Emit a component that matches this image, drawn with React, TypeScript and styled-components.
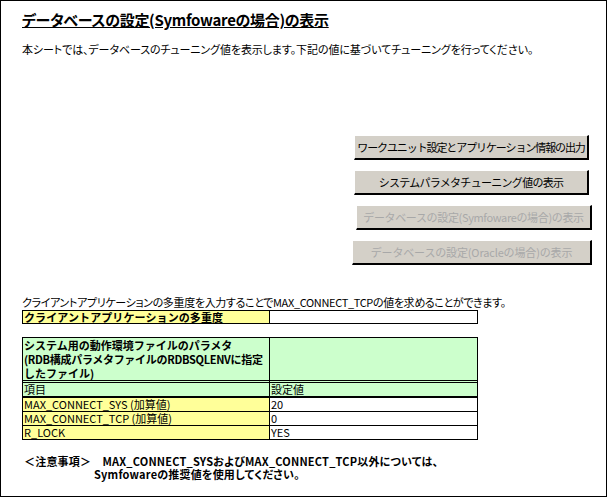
import React from "react";
import styled, { createGlobalStyle } from "styled-components";

const GlobalStyle = createGlobalStyle`
  html, body {
    margin: 0;
    padding: 0;
    background: #ffffff;
  }
  body {
    font-family: "Noto Sans CJK JP", "Liberation Sans", sans-serif;
    color: #000;
  }
`;

const Sheet = styled.div`
  box-sizing: border-box;
  width: 607px;
  height: 497px;
  border: 1px solid #000;
  padding-left: 21px;
  display: flex;
  flex-direction: column;
`;

const Title = styled.h1`
  margin: 9px 0 0;
  height: 20px;
  line-height: 20px;
  font-size: 15px;
  font-weight: 700;
  letter-spacing: -0.3px;
  font-feature-settings: "palt";
  text-decoration: underline;
  text-underline-offset: 1px;
  white-space: nowrap;
`;

const Text = styled.p<{ $top: number; $spacing?: number }>`
  margin: ${(p) => p.$top}px 0 0;
  line-height: 14px;
  height: 14px;
  font-size: 11px;
  letter-spacing: ${(p) => p.$spacing ?? 0}px;
  font-feature-settings: "palt";
  white-space: nowrap;
`;

const ButtonStack = styled.div`
  margin-top: 79px;
  padding-right: 14px;
  display: flex;
  flex-direction: column;
  align-items: flex-end;
  gap: 10px;
`;

const SheetButton = styled.button<{ $width: number; $inset?: number; $spacing?: number }>`
  box-sizing: border-box;
  width: ${(p) => p.$width}px;
  height: 25px;
  margin-right: ${(p) => p.$inset ?? 0}px;
  padding: 0;
  background: #d4d0c8;
  border-style: solid;
  border-width: 1px 2px 2px 1px;
  border-color: #ffffff #000000 #000000 #ffffff;
  font-family: inherit;
  font-size: 11px;
  letter-spacing: ${(p) => p.$spacing ?? -0.7}px;
  color: #000;
  white-space: nowrap;
  cursor: default;

  &:disabled {
    color: #a8a8a8;
  }
`;

const Grid = styled.div<{ $top: number }>`
  margin-top: ${(p) => p.$top}px;
  width: 455px;
  display: grid;
  grid-template-columns: 247px 208px;
  border-top: 1px solid #000;
  border-left: 1px solid #000;
`;

const Cell = styled.div<{
  $bg?: string;
  $h: number;
  $bold?: boolean;
  $bottom?: string;
}>`
  height: ${(p) => p.$h}px;
  background: ${(p) => p.$bg ?? "#ffffff"};
  border-right: 1px solid #000;
  border-bottom: ${(p) => p.$bottom ?? "1px solid #000"};
  padding-left: 1px;
  font-size: 11px;
  line-height: ${(p) => Math.min(p.$h, 13)}px;
  font-weight: ${(p) => (p.$bold ? 700 : 400)};
  letter-spacing: ${(p) => (p.$bold ? "0.1px" : "0")};
  white-space: nowrap;
`;

const HeaderLine = styled.div<{ $spacing?: number }>`
  height: 14px;
  line-height: 14px;
  letter-spacing: ${(p) => p.$spacing ?? 0}px;
  white-space: nowrap;
`;

const Note = styled.div`
  margin-top: 15px;
  padding-left: 2px;
  font-size: 11px;
  font-weight: 700;
  line-height: 13px;
  letter-spacing: 0.2px;
  font-feature-settings: "palt";
  white-space: nowrap;
`;

const NoteLine = styled.div<{ $indent?: number }>`
  padding-left: ${(p) => p.$indent ?? 0}px;
`;

const YELLOW = "#ffff99";
const GREEN = "#ccffcc";

const rows = [
  { name: "MAX_CONNECT_SYS (加算値)", value: "20" },
  { name: "MAX_CONNECT_TCP (加算値)", value: "0" },
  { name: "R_LOCK", value: "YES" },
];

export default function App() {
  return (
    <>
      <GlobalStyle />
      <Sheet>
        <Title>データベースの設定(Symfowareの場合)の表示</Title>
        <Text $top={12} $spacing={-0.1}>
          本シートでは、データベースのチューニング値を表示します。下記の値に基づいてチューニングを行ってください。
        </Text>

        <ButtonStack>
          <SheetButton $width={235} $inset={3} $spacing={-1.1}>
            ワークユニット設定とアプリケーション情報の出力
          </SheetButton>
          <SheetButton $width={235} $inset={3}>
            システムパラメタチューニング値の表示
          </SheetButton>
          <SheetButton $width={236} $spacing={-0.35} disabled>
            データベースの設定(Symfowareの場合)の表示
          </SheetButton>
          <SheetButton $width={240} $spacing={-0.15} disabled>
            データベースの設定(Oracleの場合)の表示
          </SheetButton>
        </ButtonStack>

        <Text $top={30} $spacing={-0.35}>
          クライアントアプリケーションの多重度を入力することでMAX_CONNECT_TCPの値を求めることができます。
        </Text>

        <Grid $top={1}>
          <Cell $bg={YELLOW} $h={12} $bold>
            クライアントアプリケーションの多重度
          </Cell>
          <Cell $h={12} />
        </Grid>

        <Grid $top={13}>
          <Cell $bg={GREEN} $h={42} $bold $bottom="3px double #000">
            <HeaderLine>システム用の動作環境ファイルのパラメタ</HeaderLine>
            <HeaderLine $spacing={-0.3}>(RDB構成パラメタファイルのRDBSQLENVに指定</HeaderLine>
            <HeaderLine>したファイル)</HeaderLine>
          </Cell>
          <Cell $bg={GREEN} $h={42} $bottom="3px double #000" />
          <Cell $bg={GREEN} $h={13} $bottom="2px solid #000">
            項目
          </Cell>
          <Cell $bg={GREEN} $h={13} $bottom="2px solid #000">
            設定値
          </Cell>
          {rows.map((r) => (
            <React.Fragment key={r.name}>
              <Cell $bg={YELLOW} $h={13}>
                {r.name}
              </Cell>
              <Cell $h={13}>{r.value}</Cell>
            </React.Fragment>
          ))}
        </Grid>

        <Note>
          <NoteLine>＜注意事項＞　MAX_CONNECT_SYSおよびMAX_CONNECT_TCP以外については、</NoteLine>
          <NoteLine $indent={70}>Symfowareの推奨値を使用してください。</NoteLine>
        </Note>
      </Sheet>
    </>
  );
}
